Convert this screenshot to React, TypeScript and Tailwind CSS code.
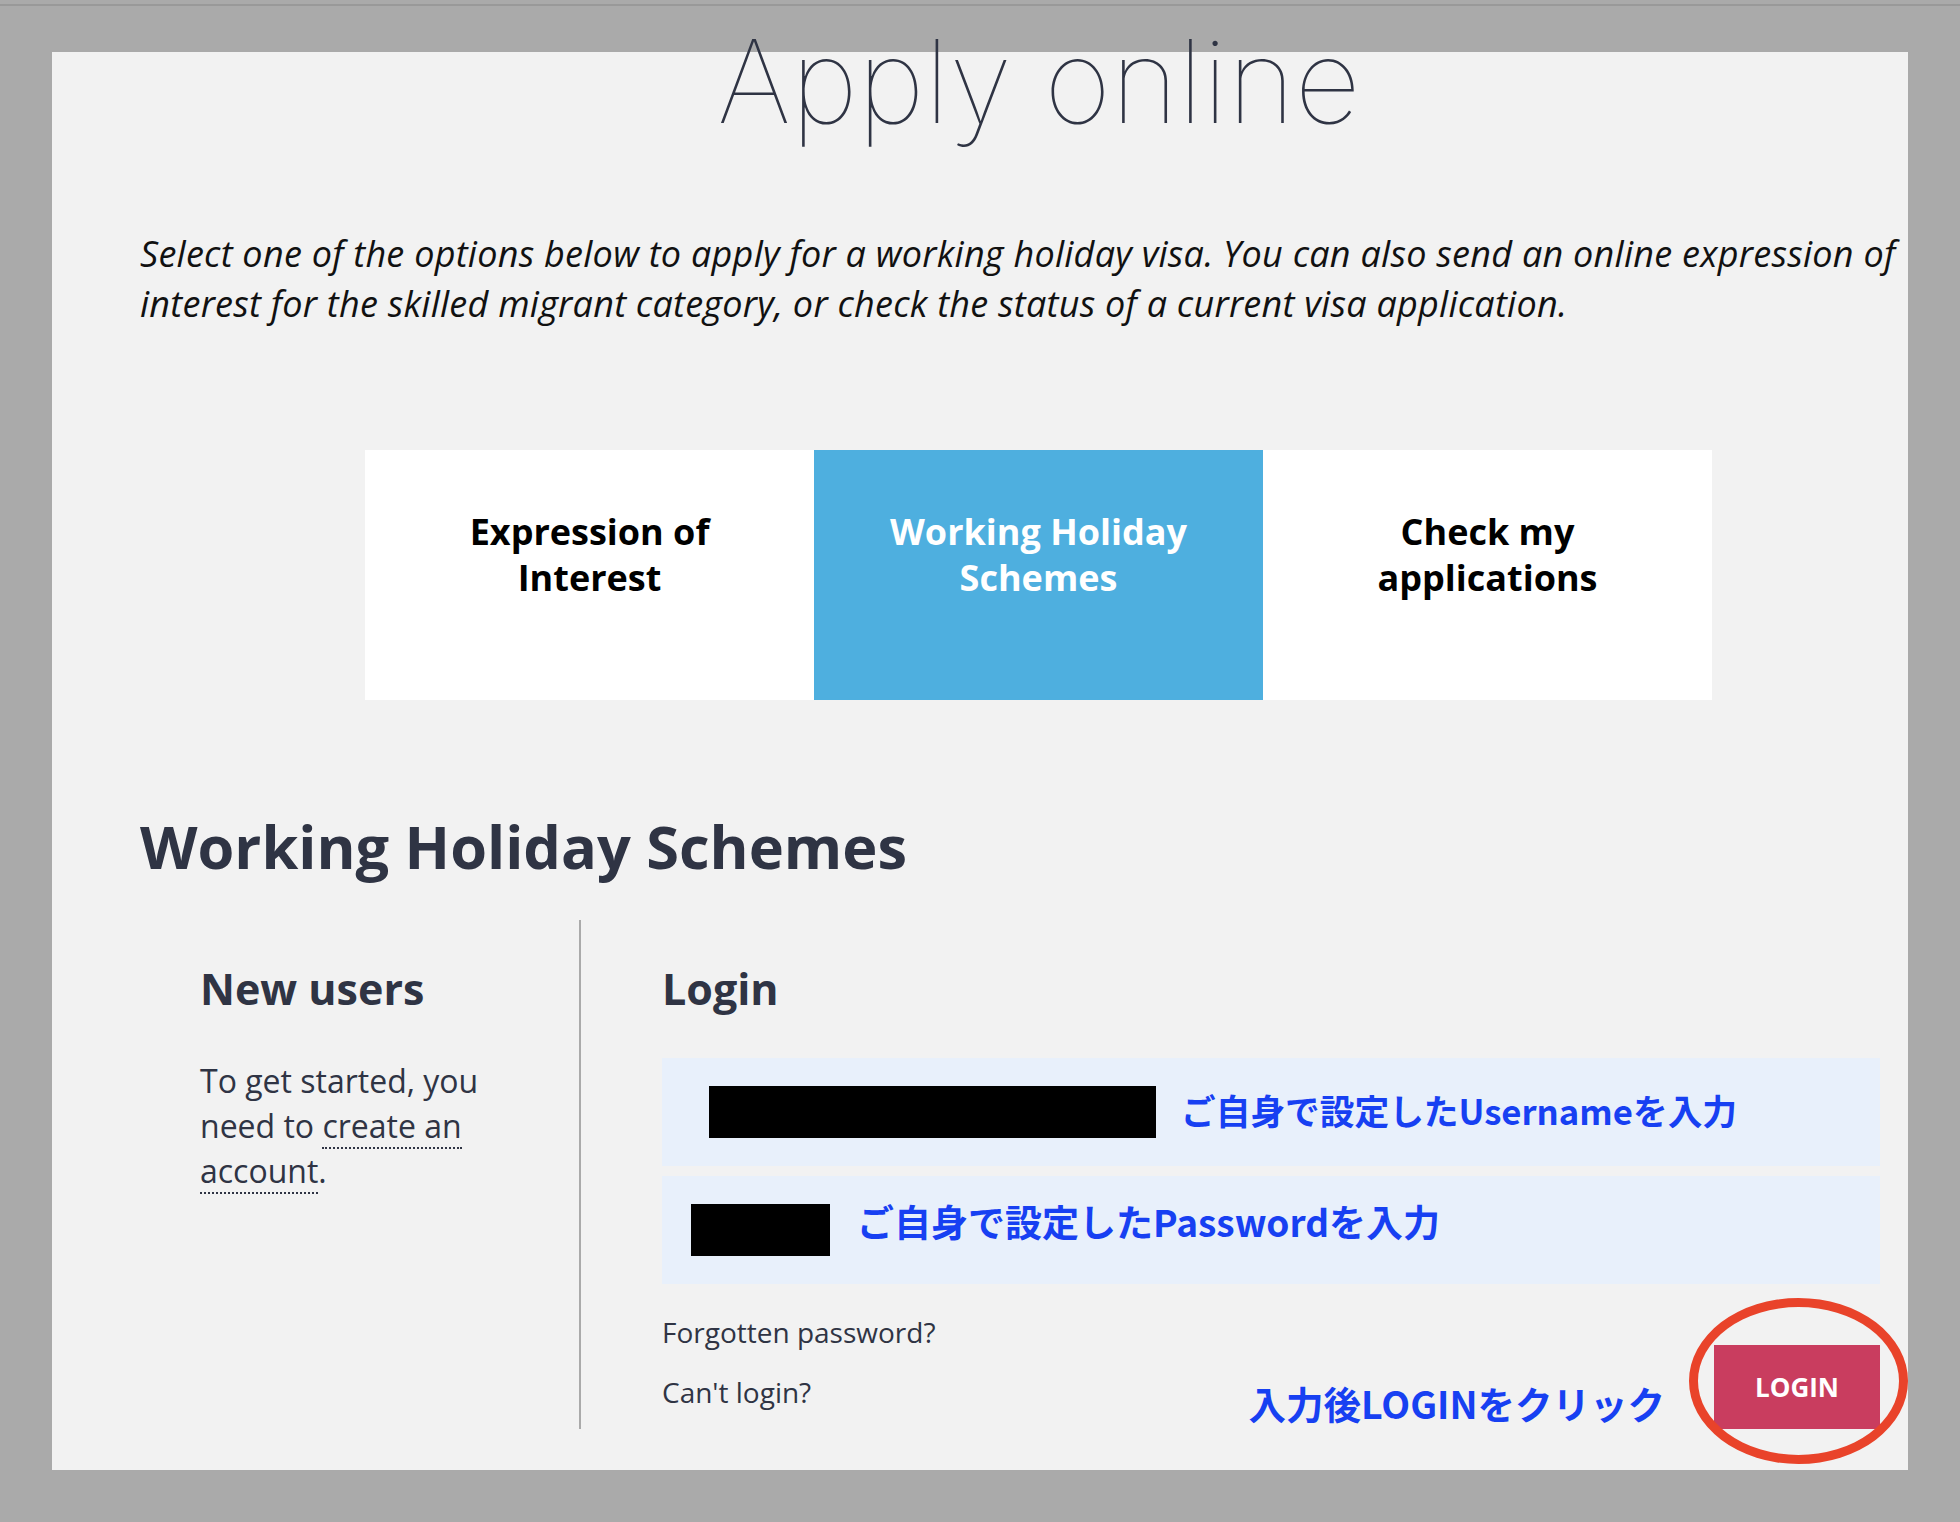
import React from 'react';

const TABS = [
  { label: ['Expression of', 'Interest'], active: false },
  { label: ['Working Holiday', 'Schemes'], active: true },
  { label: ['Check my', 'applications'], active: false },
];

const NOTE = "font-['Noto_Sans_CJK_JP',sans-serif] font-bold text-[#1740f2]";

const LoginRow: React.FC<{ boxWidth: string; padLeft: string; note: string; noteClass: string }> = ({
  boxWidth,
  padLeft,
  note,
  noteClass,
}) => (
  <div className={`h-[108px] bg-[#e8f0fb] flex items-center ${padLeft}`}>
    <div className={`h-[52px] bg-black ${boxWidth}`} />
    <span className={`${NOTE} ${noteClass} leading-none whitespace-nowrap`}>{note}</span>
  </div>
);

export default function App() {
  return (
    <div className="w-[1960px] h-[1522px] bg-[#aaaaaa] overflow-hidden font-['Open_Sans',sans-serif]">
      <div className="h-[4px]" />
      <div className="h-[2px] bg-[#999999]" />
      <div className="relative mx-[52px] mt-[46px] h-[1418px] bg-[#f2f2f2] flex flex-col">
        <h1 className="-mt-[28px] pl-[118px] text-center font-['Inter',sans-serif] font-thin text-[115px] leading-[115px] text-[#2f3444]">
          Apply online
        </h1>

        <p className="mt-[90px] pl-[88px] italic text-[36px] leading-[50px] tracking-[0.25px] text-[#111111] whitespace-nowrap">
          Select one of the options below to apply for a working holiday visa. You can also send an online expression of
          <br />
          interest for the skilled migrant category, or check the status of a current visa application.
        </p>

        <div className="mt-[121px] ml-[313px] w-[1347px] h-[250px] grid grid-cols-3">
          {TABS.map((tab) => (
            <div
              key={tab.label[0]}
              className={`pt-[59px] text-center font-bold text-[36px] leading-[46px] ${
                tab.active ? 'bg-[#4eafdf] text-white' : 'bg-white text-black'
              }`}
            >
              {tab.label[0]}
              <br />
              {tab.label[1]}
            </div>
          ))}
        </div>

        <h2 className="mt-[111px] pl-[88px] font-bold text-[59.5px] leading-[70px] text-[#2f3444]">
          Working Holiday Schemes
        </h2>

        <div className="mt-[39px] flex h-[509px]">
          <div className="ml-[88px] w-[441px] pl-[60px] border-r-2 border-[#aaaaaa]">
            <h3 className="pt-[43px] font-bold text-[43px] leading-[52px] text-[#2f3444]">New users</h3>
            <p className="mt-[43px] text-[32px] leading-[45px] text-[#2f3444]">
              To get started, you
              <br />
              need to <span className="border-b-2 border-dotted border-[#2f3444]">create an</span>
              <br />
              <span className="border-b-2 border-dotted border-[#2f3444]">account</span>.
            </p>
          </div>

          <div className="flex-1 pl-[81px] mr-[28px] flex flex-col">
            <h3 className="pt-[43px] font-bold text-[43px] leading-[52px] text-[#2f3444]">Login</h3>
            <div className="mt-[43px] flex flex-col gap-[10px]">
              <LoginRow
                boxWidth="w-[447px]"
                padLeft="pl-[47px]"
                note="ご自身で設定したUsernameを入力"
                noteClass="ml-[25px] text-[34.7px] -mt-[4px]"
              />
              <LoginRow
                boxWidth="w-[139px]"
                padLeft="pl-[29px]"
                note="ご自身で設定したPasswordを入力"
                noteClass="ml-[27px] text-[37px] -mt-[18px]"
              />
            </div>
            <div className="flex-1 flex justify-between">
              <div className="pt-[30px] flex flex-col gap-[24px] text-[28px] leading-[36px] text-[#2f3444]">
                <a>Forgotten password?</a>
                <a>Can't login?</a>
              </div>
              <div className="flex items-end gap-[49px]">
                <span className={`${NOTE} text-[37.5px] leading-[48px] mb-[2px] whitespace-nowrap`}>入力後LOGINをクリック</span>
                <button className="w-[166px] h-[84px] bg-[#c93d5f] text-white font-bold text-[26px]">LOGIN</button>
              </div>
            </div>
          </div>
        </div>

        <div className="absolute left-[1637px] top-[1246px] w-[219px] h-[166px] rounded-[50%] border-[9px] border-[#e9432a]" />
      </div>
    </div>
  );
}
